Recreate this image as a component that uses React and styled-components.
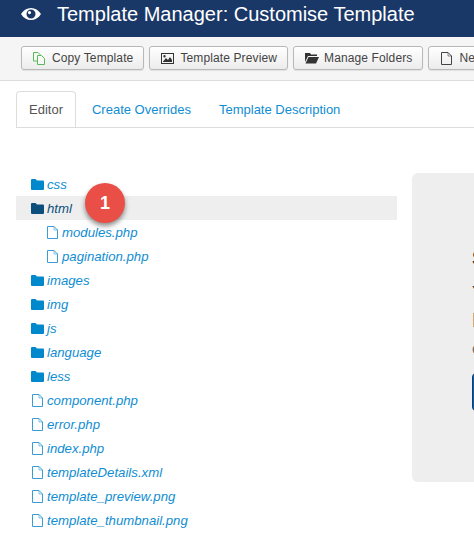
import React from "react"
import styled, { createGlobalStyle } from "styled-components"

const GlobalStyle = createGlobalStyle`
  html, body {
    margin: 0;
    padding: 0;
    background: #fff;
    font-family: "Liberation Sans", Arial, sans-serif;
    overflow: hidden;
  }
`

const Page = styled.div`
  position: relative;
  width: 474px;
  height: 551px;
  overflow: hidden;
`

const Header = styled.header`
  display: flex;
  align-items: center;
  gap: 16px;
  height: 37px;
  padding: 0 0 9px 21px;
  box-sizing: border-box;
  background: #1a3867;
  color: #fff;
`

const Title = styled.h1`
  margin: 0;
  font-size: 20px;
  font-weight: 400;
  white-space: nowrap;
`

const Toolbar = styled.div`
  display: flex;
  align-items: flex-start;
  gap: 5px;
  height: 44px;
  padding: 9px 0 0 21px;
  box-sizing: border-box;
  background: #f5f5f5;
  border-bottom: 1px solid #ddd;
  overflow: hidden;
`

const Button = styled.button`
  display: flex;
  flex: none;
  align-items: center;
  gap: 5px;
  height: 24px;
  padding: 0 10px 0 11px;
  border: 1px solid #b8b8b8;
  border-radius: 3px;
  background: linear-gradient(#fff, #ececec);
  box-shadow: 0 1px 1px rgba(0, 0, 0, 0.08);
  color: #444;
  font-family: inherit;
  font-size: 12px;
  letter-spacing: 0.01em;
`

const IconSlot = styled.span`
  display: flex;
  flex: none;
  width: 14px;
`

const Tabs = styled.nav`
  display: flex;
  height: 37px;
  margin: 10px 0 0 16px;
  box-sizing: border-box;
  border-bottom: 1px solid #ddd;
`

const Tab = styled.a`
  height: 36px;
  margin-right: ${props => (props.$active ? 2 : 0)}px;
  padding: 0 ${props => (props.$active ? 12 : 13)}px;
  box-sizing: border-box;
  border: 1px solid ${props => (props.$active ? "#ddd" : "transparent")};
  border-bottom: none;
  border-radius: 4px 4px 0 0;
  background: #fff;
  color: ${props => (props.$active ? "#555" : "#0f8dd2")};
  font-size: 13px;
  line-height: 35px;
`

const Content = styled.div`
  display: flex;
  gap: 15px;
  margin: 44px 0 0 16px;
`

const Tree = styled.ul`
  flex: none;
  width: 381px;
  margin: 0;
  padding: 0;
  list-style: none;
`

const Row = styled.li`
  display: flex;
  align-items: center;
  gap: 3px;
  height: 24px;
  padding-left: ${props => (props.$nested ? 30 : 15)}px;
  background: ${props => (props.$active ? "#eee" : "transparent")};
  color: ${props => (props.$active ? "#0b4f7c" : "#0f8dd2")};
  font-size: 13.2px;
  font-style: italic;
`

const Panel = styled.section`
  flex: none;
  width: 400px;
  height: 309px;
  margin-top: 1px;
  padding: 72px 0 0 60px;
  box-sizing: border-box;
  border-radius: 6px;
  background: #eee;
  color: #333;
`

const PanelHeading = styled.h2`
  margin: 0 0 10px;
  font-size: 20px;
  font-weight: 700;
  line-height: 26px;
`

const PanelText = styled.p`
  margin: 0 0 6px;
  font-size: 13px;
  line-height: 20px;
  color: ${props => (props.$muted ? "#666" : "#333")};
`

const PanelTitle = styled.h3`
  margin: 0 0 7px;
  font-size: 20px;
  font-weight: 400;
  line-height: 26px;
`

const PanelButton = styled.button`
  height: 38px;
  margin-top: 7px;
  padding: 0 20px;
  border: 1px solid #0f3f73;
  border-radius: 4px;
  background: #12589c;
  color: #fff;
  font-size: 14px;
`

const Badge = styled.div`
  position: absolute;
  top: 183px;
  left: 85px;
  display: flex;
  align-items: center;
  justify-content: center;
  width: 40px;
  height: 40px;
  border-radius: 50%;
  background: #e94f47;
  box-shadow: 0 3px 5px rgba(0, 0, 0, 0.45);
  color: #fff;
  font-size: 18px;
  font-weight: 700;
`

const FileGlyph = styled.svg`
  flex: none;
  margin: 0 1px;
`

const EyeIcon = () => (
  <svg width="20" height="14" viewBox="0 0 20 14">
    <path
      fill="#fff"
      fillRule="evenodd"
      d="M0 7C2.5 3 6 1 10 1s7.5 2 10 6c-2.5 4-6 6-10 6S2.500 11 0 7zm10-4.500a4.500 4.500 0 1 0 0 9 4.500 4.500 0 0 0 0-9zM8.500 4a1.600 1.600 0 1 1 0 3.200 1.600 1.600 0 0 1 0-3.200z"
    />
  </svg>
)

const CopyIcon = () => (
  <svg width="12" height="13" viewBox="0 0 12 13" fill="none" stroke="#5cb85c">
    <path d="M.5.500h4.500l2 2v6.500H.5z" fill="#f5fbf3" />
    <path d="M4.500 3.500h4l3 3v6h-7z" fill="#f5fbf3" />
  </svg>
)

const PictureIcon = () => (
  <svg width="13" height="11" viewBox="0 0 13 11">
    <path
      fill="#333"
      fillRule="evenodd"
      d="M0 0h13v11H0zm1 1v9h11V1zm1 7.500l3-3.500 2 2 2-3 2 3v2H2zM3.500 2a1.200 1.200 0 1 1 0 2.400 1.200 1.200 0 0 1 0-2.400z"
    />
  </svg>
)

const OpenFolderIcon = () => (
  <svg width="14" height="12" viewBox="0 0 14 12">
    <path fill="#333" d="M0 1h5l1 1.500h6V4H3L0 10zM3.500 5H14l-3 6.500H.5z" />
  </svg>
)

const FileIcon = ({ color = "#444" }) => (
  <FileGlyph width="11" height="13" viewBox="0 0 11 13" fill="none" stroke={color}>
    <path d="M.5.500h6.500l3.500 3.500v8.500H.5z" />
    <path d="M7 .5v3.500h3.500" strokeWidth=".6" />
  </FileGlyph>
)

const FolderIcon = ({ color }) => (
  <svg width="13" height="11" viewBox="0 0 13 11">
    <path fill={color} d="M0 1a1 1 0 0 1 1-1h3.500l1.500 1.500h6a1 1 0 0 1 1 1V10a1 1 0 0 1-1 1H1a1 1 0 0 1-1-1z" />
  </svg>
)

const entries = [
  { name: "css", folder: true },
  { name: "html", folder: true, active: true },
  { name: "modules.php", nested: true },
  { name: "pagination.php", nested: true },
  { name: "images", folder: true },
  { name: "img", folder: true },
  { name: "js", folder: true },
  { name: "language", folder: true },
  { name: "less", folder: true },
  { name: "component.php" },
  { name: "error.php" },
  { name: "index.php" },
  { name: "templateDetails.xml" },
  { name: "template_preview.png" },
  { name: "template_thumbnail.png" },
]

const App = () => {
  return (
    <Page>
      <GlobalStyle />
      <Header>
        <EyeIcon />
        <Title>Template Manager: Customise Template</Title>
      </Header>
      <Toolbar>
        <Button><IconSlot><CopyIcon /></IconSlot>Copy Template</Button>
        <Button><IconSlot><PictureIcon /></IconSlot>Template Preview</Button>
        <Button><IconSlot><OpenFolderIcon /></IconSlot>Manage Folders</Button>
        <Button><IconSlot><FileIcon /></IconSlot>New File</Button>
      </Toolbar>
      <Tabs>
        <Tab $active>Editor</Tab>
        <Tab>Create Overrides</Tab>
        <Tab>Template Description</Tab>
      </Tabs>
      <Content>
        <Tree>
          {entries.map(entry => (
            <Row key={entry.name} $active={entry.active} $nested={entry.nested}>
              {entry.folder ? (
                <FolderIcon color={entry.active ? "#0b4f7c" : "#0088cc"} />
              ) : (
                <FileIcon color="#3a9bd5" />
              )}
              {entry.name}
            </Row>
          ))}
        </Tree>
        <Panel>
          <PanelHeading>Select a file to edit</PanelHeading>
          <PanelText>You can edit files from the tree on the left.</PanelText>
          <PanelTitle>Extras</PanelTitle>
          <PanelText $muted>Create a new override for this template.</PanelText>
          <PanelButton>Close File</PanelButton>
        </Panel>
      </Content>
      <Badge>1</Badge>
    </Page>
  )
}

export default App
